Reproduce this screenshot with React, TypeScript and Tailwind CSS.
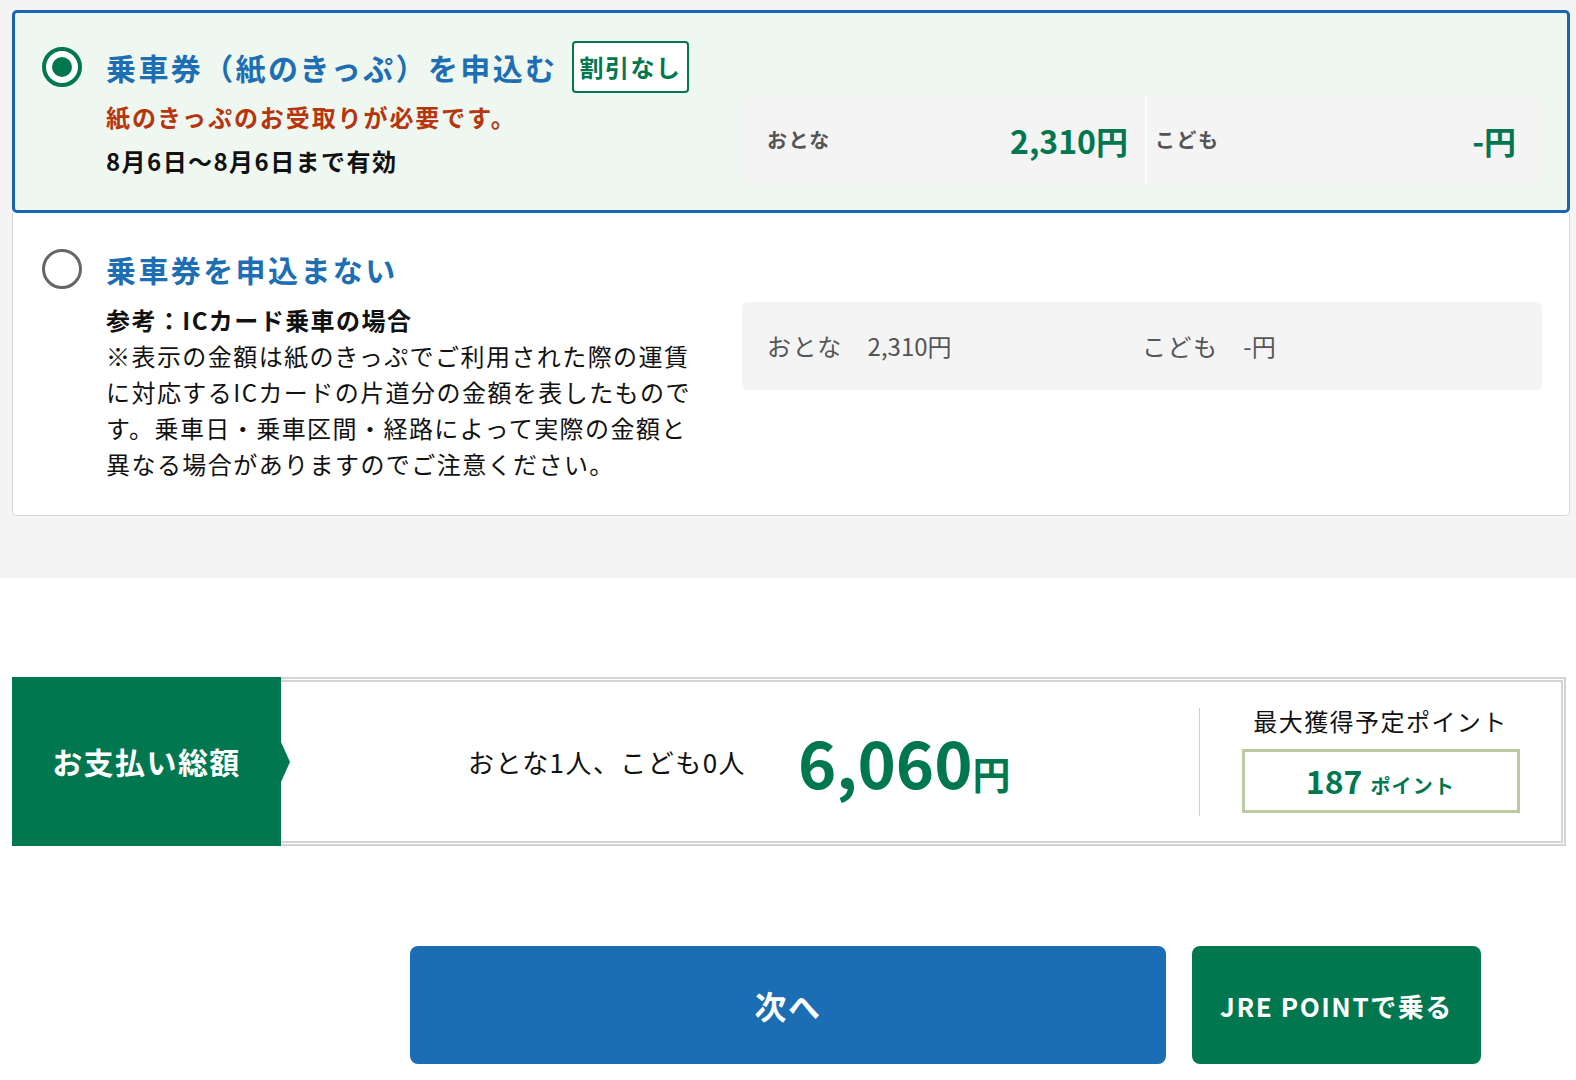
function Radio({ checked }: { checked?: boolean }) {
  if (checked) {
    return (
      <span className="flex h-[40px] w-[40px] shrink-0 items-center justify-center rounded-full border-[4px] border-[#00774f] bg-white">
        <span className="h-[20px] w-[20px] rounded-full bg-[#00774f]" />
      </span>
    );
  }
  return <span className="h-[40px] w-[40px] shrink-0 rounded-full border-[3px] border-[#666] bg-white" />;
}

export default function App() {
  return (
    <div className="min-h-[1080px] w-[1576px] bg-white pb-[20px] font-['Noto_Sans_CJK_JP','Noto_Sans',sans-serif] tracking-[0.09em] text-[#222]">
      {/* 乗車券の選択 */}
      <section className="bg-[#f4f4f4] pb-[62px] pl-[12px] pr-[6px] pt-[10px]">
        <div className="relative z-10 rounded-[5px] border-[3px] border-[#1a64b4] bg-[#eff7f1] pb-[27px] pl-[27px] pr-[25px] pt-[28px]">
          <div className="flex h-[52px] items-center">
            <Radio checked />
            <span className="ml-[24px] text-[30px] font-bold leading-none tracking-[0.08em] text-[#1e6eb4]">
              乗車券（紙のきっぷ）を申込む
            </span>
            <span className="ml-[14px] flex h-[52px] items-center rounded-[4px] border-2 border-[#00774f] bg-white px-[6px] text-[24px] font-bold leading-none tracking-[0.06em] text-[#00774f]">
              割引なし
            </span>
          </div>
          <div className="mt-[2px] flex items-start">
            <div className="w-[700px] shrink-0 pl-[64px]">
              <p className="text-[24px] font-bold leading-[44px] tracking-[0.08em] text-[#b6350c]">紙のきっぷのお受取りが必要です。</p>
              <p className="text-[24px] font-bold leading-[44px] text-[#111]">8月6日〜8月6日まで有効</p>
            </div>
            <div className="mt-[2px] flex h-[86px] flex-1 bg-[#f4f4f4]">
              <div className="flex w-[403px] items-center justify-between pl-[25px] pr-[17px]">
                <span className="text-[20px] font-bold text-[#555]">おとな</span>
                <span className="text-[32px] font-bold leading-none tracking-normal text-[#00774f]">2,310円</span>
              </div>
              <div className="w-[2px] bg-white" />
              <div className="flex flex-1 items-center justify-between pl-[8px] pr-[26px]">
                <span className="text-[20px] font-bold text-[#555]">こども</span>
                <span className="text-[32px] font-bold leading-none tracking-normal text-[#00774f]">-円</span>
              </div>
            </div>
          </div>
        </div>

        <div className="rounded-b-[5px] border border-t-0 border-[#d6d6d6] bg-white pb-[33px] pl-[29px] pr-[27px] pt-[30px]">
          <div className="flex h-[52px] items-center">
            <Radio />
            <span className="ml-[24px] text-[30px] font-bold leading-none tracking-[0.08em] text-[#1e6eb4]">乗車券を申込まない</span>
          </div>
          <div className="mt-[7px] flex items-start">
            <div className="w-[700px] shrink-0 pl-[64px]">
              <p className="text-[24px] font-bold leading-[36px] text-[#111]">参考：ICカード乗車の場合</p>
              <p className="text-[24px] leading-[36px] text-[#111]">
                ※表示の金額は紙のきっぷでご利用された際の運賃
                <br />
                に対応するICカードの片道分の金額を表したもので
                <br />
                す。乗車日・乗車区間・経路によって実際の金額と
                <br />
                異なる場合がありますのでご注意ください。
              </p>
            </div>
            <div className="grid h-[88px] flex-1 grid-cols-2 items-center rounded-[6px] bg-[#f4f4f4] px-[25px] text-[24px] tracking-[0.06em] text-[#555]">
              <div className="flex items-center gap-[25px]">
                <span>おとな</span>
                <span className="tracking-normal">2,310円</span>
              </div>
              <div className="flex items-center gap-[25px]">
                <span>こども</span>
                <span className="tracking-normal">-円</span>
              </div>
            </div>
          </div>
        </div>
      </section>

      {/* お支払い総額 */}
      <section className="mt-[99px] pl-[12px] pr-[10px]">
        <div className="flex h-[169px]">
          <div className="relative z-10 flex w-[269px] shrink-0 items-center justify-center bg-[#00774f]">
            <span className="text-[30px] font-bold text-white">お支払い総額</span>
            <span className="absolute right-[-9px] top-1/2 h-0 w-0 -translate-y-1/2 border-y-[20px] border-l-[9px] border-y-transparent border-l-[#00774f]" />
          </div>
          <div className="flex flex-1 items-center border-[5px] border-l-0 border-double border-[#d4d4d4]">
            <div className="flex flex-1 items-center justify-center">
              <span className="text-[26px] text-[#111]">おとな1人、こども0人</span>
              <span className="ml-[52px] flex items-baseline text-[#00774f]">
                <span className="text-[65px] font-bold leading-none tracking-normal">6,060</span>
                <span className="text-[38px] font-bold leading-none">円</span>
              </span>
            </div>
            <div className="h-[108px] w-px bg-[#cfcfcf]" />
            <div className="mb-[8px] flex w-[361px] flex-col items-center">
              <span className="text-[24px] leading-[36px] text-[#111]">最大獲得予定ポイント</span>
              <div className="mt-[10px] flex h-[64px] w-[278px] items-baseline justify-center border-[3px] border-[#bccb9f] pt-[12px]">
                <span className="text-[32px] font-bold leading-none tracking-normal text-[#00774f]">187</span>
                <span className="ml-[8px] text-[20px] font-bold leading-none tracking-[0.06em] text-[#00774f]">ポイント</span>
              </div>
            </div>
          </div>
        </div>
      </section>

      {/* ボタン */}
      <section className="mt-[100px] grid grid-cols-[1fr_756px_1fr]">
        <div />
        <button className="flex h-[118px] items-center justify-center rounded-[8px] bg-[#1b6eb3] text-[32px] font-bold text-white">
          次へ
        </button>
        <div className="pl-[26px]">
          <button className="flex h-[118px] w-[289px] items-center justify-center rounded-[8px] bg-[#00774f] text-[26px] font-bold tracking-[0.06em] text-white">
            JRE POINTで乗る
          </button>
        </div>
      </section>
    </div>
  );
}
